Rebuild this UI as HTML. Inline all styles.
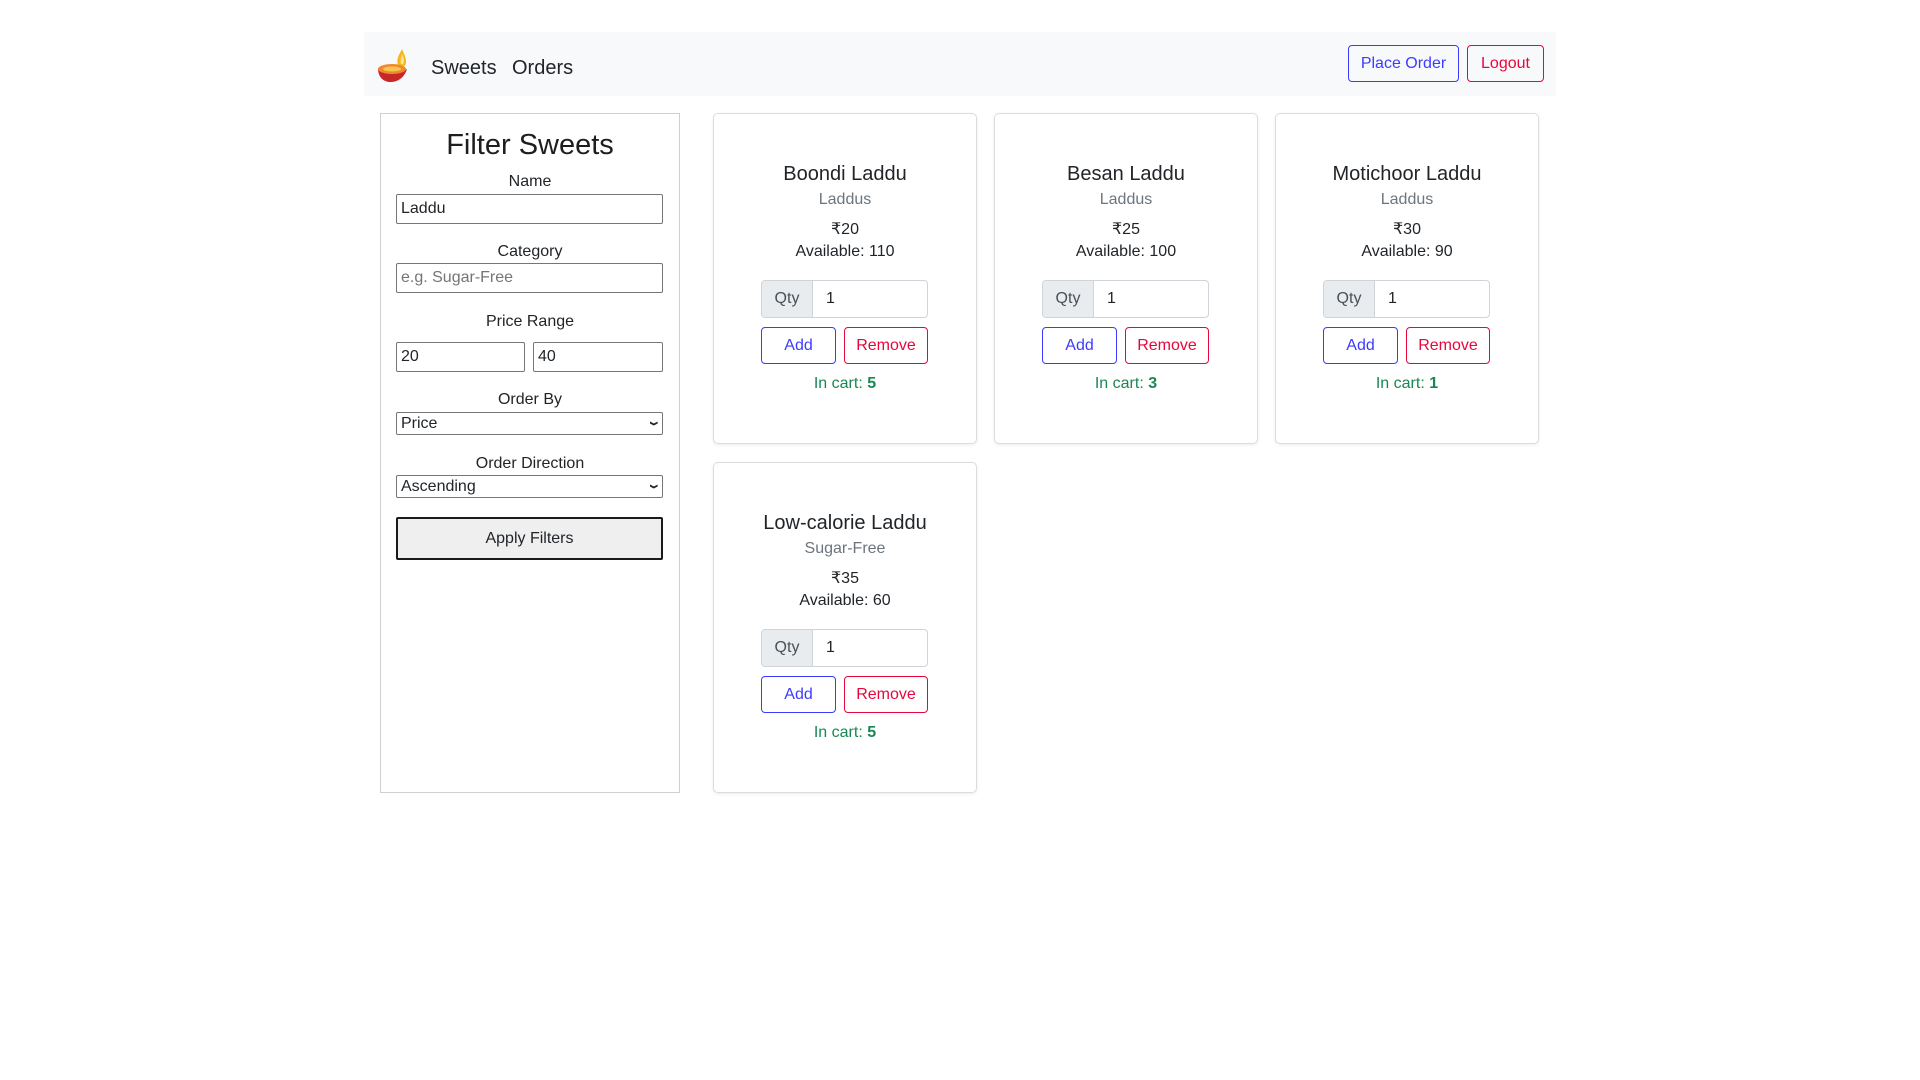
<!DOCTYPE html>
<html><head><meta charset="utf-8"><style>
*{box-sizing:border-box;margin:0;padding:0}
body{width:1920px;height:1080px;background:#fff;font-family:"Liberation Sans","DejaVu Sans",sans-serif;color:#212529;position:relative;overflow:hidden}
.a{position:absolute}
.nav{left:364px;top:32px;width:1192px;height:64px;background:#f8f9fa}
.nl{font-size:20px;color:#212529}
.btn{position:absolute;border:1px solid;border-radius:4px;background:transparent;font-size:16px;text-align:center;display:flex;align-items:center;justify-content:center}
.panel{left:380px;top:113px;width:300px;height:680px;border:1.5px solid #cfcfcf}
.lbl{position:absolute;left:0;width:100%;text-align:center;font-size:16px}
.inp{position:absolute;border:1px solid #767676;border-radius:2px;background:#fff;font-size:16px;padding-left:4px;display:flex;align-items:center}
.chev{position:absolute;right:5px;top:2px;font-size:15px;font-weight:bold;transform:rotate(90deg) scaleY(1.3)}
.card{position:absolute;width:264px;height:331px;border:1px solid #dcdcdc;border-radius:5px;box-shadow:0 1px 3px rgba(0,0,0,.08)}
.card .t{position:absolute;top:49px;width:100%;text-align:center;font-size:20px}
.card .c{position:absolute;top:77px;width:100%;text-align:center;font-size:16px;color:#6c757d}
.card .p{position:absolute;top:105px;width:100%;text-align:center;font-size:16px}
.card .v{position:absolute;top:129px;width:100%;text-align:center;font-size:16px}
.qg{position:absolute;left:47px;top:166px;width:167px;height:38px;border:1px solid #ced4da;border-radius:4px;display:flex;overflow:hidden}
.qg .q{width:51px;background:#e9ecef;border-right:1px solid #ced4da;display:flex;align-items:center;justify-content:center;color:#495057;font-size:16px}
.qg .n{padding-left:13px;display:flex;align-items:center;font-size:16px}
.ic{position:absolute;top:261px;width:100%;text-align:center;font-size:16px;color:#198754}
</style></head><body>
<div class="a nav"></div>
<svg class="a" style="left:375px;top:45px" width="40" height="40" viewBox="0 0 40 40">
<path d="M27 4 C24 10 21 14 23 20 C25 24 31 22 31 17 C31 12 29 9 27 4Z" fill="#f7b51e"/>
<path d="M27 9 C26 13 25 16 26 19 C28 20 29 18 29 16 C29 13 28 11 27 9Z" fill="#fde68a"/>
<path d="M3 23 C3 33 9 37 16 37 C24 37 30 31 32 24 C25 27 10 26 3 23Z" fill="#c62828"/>
<ellipse cx="17" cy="24" rx="14" ry="5" fill="#ef8a2c"/>
<ellipse cx="17" cy="24" rx="9" ry="2.5" fill="#f6c453"/>
</svg>
<div class="a nl" style="left:431px;top:57px">Sweets</div>
<div class="a nl" style="left:512px;top:57px">Orders</div>
<div class="btn" style="left:1348px;top:45px;width:111px;height:37px;border-color:#3b3bff;color:#3b3bff">Place Order</div>
<div class="btn" style="left:1467px;top:45px;width:77px;height:37px;border-color:#e8063c;color:#e8063c">Logout</div>

<div class="a panel">
<div class="lbl" style="top:15px;font-size:29px;color:#1e1e1e">Filter Sweets</div>
<div class="lbl" style="top:59px">Name</div>
<div class="inp" style="left:15px;top:80px;width:267px;height:30px">Laddu</div>
<div class="lbl" style="top:129px">Category</div>
<div class="inp" style="left:15px;top:149px;width:267px;height:30px;color:#757575">e.g. Sugar-Free</div>
<div class="lbl" style="top:199px">Price Range</div>
<div class="inp" style="left:15px;top:228px;width:129px;height:30px">20</div>
<div class="inp" style="left:152px;top:228px;width:130px;height:30px">40</div>
<div class="lbl" style="top:277px">Order By</div>
<div class="inp" style="left:15px;top:298px;width:267px;height:23px">Price<span class="chev">›</span></div>
<div class="lbl" style="top:341px">Order Direction</div>
<div class="inp" style="left:15px;top:361px;width:267px;height:23px">Ascending<span class="chev">›</span></div>
<div class="inp" style="left:15px;top:403px;width:267px;height:43px;border:2px solid #1a1a1a;background:#efefef;justify-content:center;padding:0">Apply Filters</div>
</div>

<div class="card" style="left:713px;top:113px"><div class="t">Boondi Laddu</div><div class="c">Laddus</div><div class="p">₹20</div><div class="v">Available: 110</div><div class="qg"><div class="q">Qty</div><div class="n">1</div></div><div class="btn" style="left:47px;top:213px;width:75px;height:37px;border-color:#3b3bff;color:#3b3bff">Add</div><div class="btn" style="left:130px;top:213px;width:84px;height:37px;border-color:#e8063c;color:#e8063c">Remove</div><div class="ic">In cart: <b>5</b></div></div>
<div class="card" style="left:994px;top:113px"><div class="t">Besan Laddu</div><div class="c">Laddus</div><div class="p">₹25</div><div class="v">Available: 100</div><div class="qg"><div class="q">Qty</div><div class="n">1</div></div><div class="btn" style="left:47px;top:213px;width:75px;height:37px;border-color:#3b3bff;color:#3b3bff">Add</div><div class="btn" style="left:130px;top:213px;width:84px;height:37px;border-color:#e8063c;color:#e8063c">Remove</div><div class="ic">In cart: <b>3</b></div></div>
<div class="card" style="left:1275px;top:113px"><div class="t">Motichoor Laddu</div><div class="c">Laddus</div><div class="p">₹30</div><div class="v">Available: 90</div><div class="qg"><div class="q">Qty</div><div class="n">1</div></div><div class="btn" style="left:47px;top:213px;width:75px;height:37px;border-color:#3b3bff;color:#3b3bff">Add</div><div class="btn" style="left:130px;top:213px;width:84px;height:37px;border-color:#e8063c;color:#e8063c">Remove</div><div class="ic">In cart: <b>1</b></div></div>
<div class="card" style="left:713px;top:462px"><div class="t">Low-calorie Laddu</div><div class="c">Sugar-Free</div><div class="p">₹35</div><div class="v">Available: 60</div><div class="qg"><div class="q">Qty</div><div class="n">1</div></div><div class="btn" style="left:47px;top:213px;width:75px;height:37px;border-color:#3b3bff;color:#3b3bff">Add</div><div class="btn" style="left:130px;top:213px;width:84px;height:37px;border-color:#e8063c;color:#e8063c">Remove</div><div class="ic">In cart: <b>5</b></div></div>
</body></html>
